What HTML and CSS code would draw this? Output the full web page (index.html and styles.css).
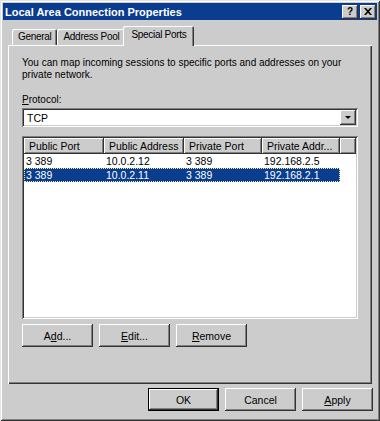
FILE: index.html
```html
<!DOCTYPE html>
<html lang="en">
<head>
    <meta charset="UTF-8">
    <title>Local Area Connection Properties</title>
    <link rel="stylesheet" href="styles.css">
</head>
<body>
    <div class="window">
        <!-- Title bar -->
        <div class="titlebar">
            <span class="title">Local Area Connection Properties</span>
            <div class="caption-buttons">
                <button class="cap-btn">?</button>
                <button class="cap-btn close">
                    <svg width="8" height="7" viewBox="0 0 8 7"><path d="M0 0h2l2 2.2L6 0h2L5 3.5 8 7H6L4 4.8 2 7H0l3-3.5z" fill="#000"/></svg>
                </button>
            </div>
        </div>

        <!-- Tabs -->
        <div class="tabs">
            <div class="tab">General</div>
            <div class="tab">Address Pool</div>
            <div class="tab active">Special Ports</div>
        </div>

        <div class="panel">
            <p class="intro">You can map incoming sessions to specific ports and addresses on your private network.</p>

            <label class="field-label"><u>P</u>rotocol:</label>
            <div class="select">
                <span class="select-value">TCP</span>
                <span class="select-arrow"></span>
            </div>

            <!-- Port mappings -->
            <div class="listview">
                <div class="lv-header">
                    <div class="col c1">Public Port</div>
                    <div class="col c2">Public Address</div>
                    <div class="col c3">Private Port</div>
                    <div class="col c4">Private Addr...</div>
                    <div class="col c5"></div>
                </div>
                <div class="lv-row">
                    <div class="cell c1">3 389</div>
                    <div class="cell c2">10.0.2.12</div>
                    <div class="cell c3">3 389</div>
                    <div class="cell c4">192.168.2.5</div>
                </div>
                <div class="lv-row selected">
                    <div class="cell c1">3 389</div>
                    <div class="cell c2">10.0.2.11</div>
                    <div class="cell c3">3 389</div>
                    <div class="cell c4">192.168.2.1</div>
                </div>
            </div>

            <div class="panel-buttons">
                <button class="btn">A<u>d</u>d...</button>
                <button class="btn"><u>E</u>dit...</button>
                <button class="btn"><u>R</u>emove</button>
            </div>
        </div>

        <div class="dialog-buttons">
            <button class="btn default">OK</button>
            <button class="btn">Cancel</button>
            <button class="btn"><u>A</u>pply</button>
        </div>
    </div>
</body>
</html>
```

FILE: styles.css
```css
body {
    margin: 0;
    font-family: "Liberation Sans", Arial, sans-serif;
    font-size: 10px;
    color: #000;
    background-color: #cccccc;
}

.window {
    width: 380px;
    height: 421px;
    box-sizing: border-box;
    padding: 3px 3px 0 3px;
    background-color: #cccccc;
    box-shadow: inset 1px 1px #e4e4e4, inset -1px -1px #333333,
                inset 2px 2px #ffffff, inset -2px -2px #808080;
    display: flex;
    flex-direction: column;
}

.titlebar {
    height: 17px;
    background-color: #0a3c8f;
    display: flex;
    align-items: center;
    justify-content: space-between;
    padding: 0 1px 0 2px;
}

.title {
    color: #fff;
    font-weight: bold;
    font-size: 11px;
}

.caption-buttons {
    display: flex;
    gap: 2px;
}

.cap-btn {
    width: 16px;
    height: 14px;
    padding: 0;
    border: none;
    background-color: #cccccc;
    font-family: "Liberation Sans", Arial, sans-serif;
    font-weight: bold;
    font-size: 10px;
    line-height: 14px;
    display: flex;
    align-items: center;
    justify-content: center;
    box-shadow: inset -1px -1px #333333, inset 1px 1px #ffffff,
                inset -2px -2px #808080;
}

.tabs {
    display: flex;
    align-items: flex-end;
    height: 25px;
    margin: 0 0 0 5px;
    padding-left: 4px;
}

.tab {
    height: 16px;
    line-height: 16px;
    padding: 0 6px;
    letter-spacing: -0.3px;
    box-shadow: inset 1px 1px #ffffff, inset -1px 0 #333333, inset -2px 0 #808080;
    border-radius: 2px 2px 0 0;
    position: relative;
}

.tab.active {
    height: 20px;
    line-height: 18px;
    margin-left: -2px;
    padding: 0 8px;
    z-index: 1;
    background-color: #cccccc;
    margin-bottom: -1px;
}

.panel {
    margin: 0 5px 0 5px;
    height: 339px;
    box-sizing: border-box;
    padding: 12px 14px 0 14px;
    box-shadow: inset 1px 1px #ffffff, inset -1px -1px #333333,
                inset -2px -2px #808080;
    display: flex;
    flex-direction: column;
}

.intro {
    margin: 0 0 13px 0;
    line-height: 12px;
}

.field-label {
    display: block;
    margin-bottom: 3px;
}

.select {
    height: 19px;
    box-sizing: border-box;
    background-color: #fff;
    box-shadow: inset 1px 1px #808080, inset -1px -1px #ffffff,
                inset 2px 2px #333333, inset -2px -2px #cccccc;
    display: flex;
    align-items: center;
    justify-content: space-between;
    padding: 2px;
}

.select-value {
    padding-left: 3px;
    font-size: 10.5px;
}

.select-arrow {
    width: 16px;
    height: 15px;
    background-color: #cccccc;
    box-shadow: inset -1px -1px #333333, inset 1px 1px #ffffff,
                inset -2px -2px #808080;
    position: relative;
}

.select-arrow::after {
    content: "";
    position: absolute;
    left: 5px;
    top: 6px;
    border-left: 3px solid transparent;
    border-right: 3px solid transparent;
    border-top: 3px solid #000;
}

.listview {
    margin-top: 9px;
    height: 183px;
    box-sizing: border-box;
    background-color: #fff;
    padding: 2px;
    font-size: 10.5px;
    box-shadow: inset 1px 1px #808080, inset -1px -1px #ffffff,
                inset 2px 2px #333333, inset -2px -2px #cccccc;
}

.lv-header {
    display: flex;
    height: 16px;
}

.col {
    box-sizing: border-box;
    background-color: #cccccc;
    padding-left: 5px;
    line-height: 16px;
    box-shadow: inset -1px -1px #333333, inset 1px 1px #ffffff,
                inset -2px -2px #808080;
    white-space: nowrap;
}

.c1 { width: 80px; }
.c2 { width: 80px; }
.c3 { width: 78px; }
.c4 { width: 78px; }
.c5 { flex: 1; }

.lv-row {
    display: flex;
    height: 14px;
    line-height: 14px;
}

.cell {
    box-sizing: border-box;
    padding-left: 2px;
    white-space: nowrap;
}

.lv-row.selected {
    width: 316px;
    background-color: #0a3c8f;
    color: #fff;
    outline: 1px dotted #f0f0a0;
    outline-offset: -1px;
}

.panel-buttons {
    display: flex;
    gap: 6px;
    margin-top: 5px;
}

.btn {
    width: 71px;
    height: 23px;
    padding: 0;
    border: none;
    background-color: #cccccc;
    font-family: "Liberation Sans", Arial, sans-serif;
    font-size: 10.5px;
    color: #000;
    box-shadow: inset -1px -1px #333333, inset 1px 1px #ffffff,
                inset -2px -2px #808080;
}

.btn.default {
    box-shadow: inset 0 0 0 1px #000, inset -2px -2px #333333,
                inset 2px 2px #ffffff, inset -3px -3px #808080;
}

.dialog-buttons {
    display: flex;
    justify-content: flex-end;
    gap: 6px;
    margin-top: 4px;
    padding-right: 4px;
}
```
